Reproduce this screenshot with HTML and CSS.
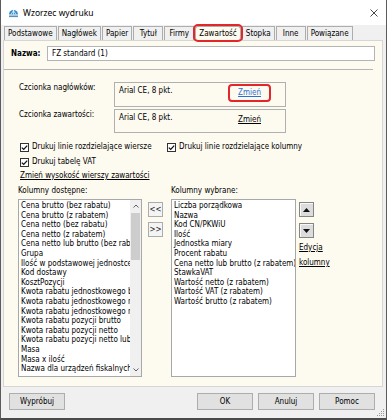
FILE: index.html
```html
<!DOCTYPE html>
<html lang="pl">
<head>
<meta charset="utf-8">
<title>Wzorzec wydruku</title>
<link rel="stylesheet" href="styles.css">
</head>
<body>
<div class="window">
  <div class="titlebar">
    <svg class="appicon" viewBox="0 0 11 10" aria-hidden="true">
      <path d="M1 6.5 A4.5 4.5 0 0 1 10 6.5 Z" fill="#2f8ccf"/>
      <path d="M3 6.5 L5.5 2.5 M5.5 6.5 V2 M8 6.5 L5.5 2.5" stroke="#fff" stroke-width=".7" fill="none"/>
      <rect x="1" y="7.5" width="9" height="1.6" fill="#5b8db8"/>
    </svg>
    <span class="title">Wzorzec wydruku</span>
    <svg class="close" viewBox="0 0 8 8" aria-hidden="true">
      <path d="M0.5 0.5 L7.5 7.5 M7.5 0.5 L0.5 7.5" stroke="#333" stroke-width="0.9"/>
    </svg>
  </div>

  <div class="tabs">
    <div class="tab">Podstawowe</div>
    <div class="tab">Nagłówek</div>
    <div class="tab">Papier</div>
    <div class="tab">Tytuł</div>
    <div class="tab">Firmy</div>
    <div class="tab active">Zawartość</div>
    <div class="tab">Stopka</div>
    <div class="tab">Inne</div>
    <div class="tab">Powiązane</div>
  </div>

  <div class="panel">
    <div class="name-row">
      <span class="name-label">Nazwa:</span>
      <div class="input">FZ standard (1)</div>
    </div>
    <div class="sep"></div>

    <div class="font-row first">
      <span class="font-label">Czcionka nagłówków:</span>
      <div class="font-box">
        <span>Arial CE, 8 pkt.</span>
        <span class="change-wrap marked"><a class="link blue">Zmień</a></span>
      </div>
    </div>
    <div class="font-row second">
      <span class="font-label">Czcionka zawartości:</span>
      <div class="font-box">
        <span>Arial CE, 8 pkt.</span>
        <span class="change-wrap"><a class="link">Zmień</a></span>
      </div>
    </div>

    <div class="check-row r1">
      <span class="check wide">
        <svg class="cb" viewBox="0 0 9 9" aria-hidden="true"><rect x=".5" y=".5" width="8" height="8" fill="#fff" stroke="#333"/><path d="M1.8 4.6 L3.7 6.4 L7.2 2.6" fill="none" stroke="#111" stroke-width="1.3"/></svg>
        Drukuj linie rozdzielające wiersze
      </span>
      <span class="check">
        <svg class="cb" viewBox="0 0 9 9" aria-hidden="true"><rect x=".5" y=".5" width="8" height="8" fill="#fff" stroke="#333"/><path d="M1.8 4.6 L3.7 6.4 L7.2 2.6" fill="none" stroke="#111" stroke-width="1.3"/></svg>
        Drukuj linie rozdzielające kolumny
      </span>
    </div>
    <div class="check-row r2">
      <span class="check">
        <svg class="cb" viewBox="0 0 9 9" aria-hidden="true"><rect x=".5" y=".5" width="8" height="8" fill="#fff" stroke="#333"/><path d="M1.8 4.6 L3.7 6.4 L7.2 2.6" fill="none" stroke="#111" stroke-width="1.3"/></svg>
        Drukuj tabelę VAT
      </span>
    </div>

    <div class="link-row"><a class="link">Zmień wysokość wierszy zawartości</a></div>

    <div class="cols-labels">
      <span class="lab-left">Kolumny dostępne:</span>
      <span>Kolumny wybrane:</span>
    </div>

    <div class="lists">
      <div class="list left">
        <div class="items">
          <div>Cena brutto (bez rabatu)</div>
          <div>Cena brutto (z rabatem)</div>
          <div>Cena netto (bez rabatu)</div>
          <div>Cena netto (z rabatem)</div>
          <div>Cena netto lub brutto (bez rabatu)</div>
          <div>Grupa</div>
          <div>Ilość w podstawowej jednostce</div>
          <div>Kod dostawy</div>
          <div>KosztPozycji</div>
          <div>Kwota rabatu jednostkowego brutto</div>
          <div>Kwota rabatu jednostkowego netto</div>
          <div>Kwota rabatu jednostkowego netto lub brutto</div>
          <div>Kwota rabatu pozycji brutto</div>
          <div>Kwota rabatu pozycji netto</div>
          <div>Kwota rabatu pozycji netto lub brutto</div>
          <div>Masa</div>
          <div>Masa x ilość</div>
          <div>Nazwa dla urządzeń fiskalnych</div>
        </div>
        <div class="scrollbar">
          <div class="sb-arrow">
            <svg viewBox="0 0 6 4" aria-hidden="true"><path d="M0.5 3.5 L3 1 L5.5 3.5" fill="none" stroke="#606060" stroke-width="1"/></svg>
          </div>
          <div class="sb-track"><div class="sb-thumb"></div></div>
          <div class="sb-arrow">
            <svg viewBox="0 0 6 4" aria-hidden="true"><path d="M0.5 0.5 L3 3 L5.5 0.5" fill="none" stroke="#606060" stroke-width="1"/></svg>
          </div>
        </div>
      </div>

      <div class="mid">
        <button class="move">&lt;&lt;</button>
        <button class="move">&gt;&gt;</button>
      </div>

      <div class="list right">
        <div class="items">
          <div>Liczba porządkowa</div>
          <div>Nazwa</div>
          <div>Kod CN/PKWiU</div>
          <div>Ilość</div>
          <div>Jednostka miary</div>
          <div>Procent rabatu</div>
          <div>Cena netto lub brutto (z rabatem)</div>
          <div>StawkaVAT</div>
          <div>Wartość netto (z rabatem)</div>
          <div>Wartość VAT (z rabatem)</div>
          <div>Wartość brutto (z rabatem)</div>
        </div>
      </div>

      <div class="side">
        <button class="order"><svg viewBox="0 0 7 4" aria-hidden="true"><path d="M0 4 L3.5 0 L7 4 Z" fill="#111"/></svg></button>
        <button class="order"><svg viewBox="0 0 7 4" aria-hidden="true"><path d="M0 0 L3.5 4 L7 0 Z" fill="#111"/></svg></button>
        <div class="side-links"><a class="link">Edycja</a><br><a class="link">kolumny</a></div>
      </div>
    </div>
  </div>

  <div class="footer">
    <button class="btn">Wypróbuj</button>
    <div class="spacer"></div>
    <button class="btn">OK</button>
    <button class="btn">Anuluj</button>
    <button class="btn">Pomoc</button>
  </div>

  <svg class="grip" viewBox="0 0 8 8" aria-hidden="true">
    <rect x="6" y="0" width="1" height="1" fill="#9a9a9a"/>
    <rect x="4" y="2" width="1" height="1" fill="#9a9a9a"/>
    <rect x="6" y="2" width="1" height="1" fill="#9a9a9a"/>
    <rect x="2" y="4" width="1" height="1" fill="#9a9a9a"/>
    <rect x="4" y="4" width="1" height="1" fill="#9a9a9a"/>
    <rect x="6" y="4" width="1" height="1" fill="#9a9a9a"/>
    <rect x="0" y="6" width="1" height="1" fill="#9a9a9a"/>
    <rect x="2" y="6" width="1" height="1" fill="#9a9a9a"/>
    <rect x="4" y="6" width="1" height="1" fill="#9a9a9a"/>
    <rect x="6" y="6" width="1" height="1" fill="#9a9a9a"/>
  </svg>
</div>
</body>
</html>
```

FILE: styles.css
```css
* { box-sizing: border-box; }

html, body {
  margin: 0;
  padding: 0;
}

body {
  width: 387px;
  height: 420px;
  overflow: hidden;
  background: #fff;
  color: #000;
  font-family: "DejaVu Sans Condensed", "DejaVu Sans", sans-serif;
  font-size: 8px;
}

.window {
  position: relative;
  width: 387px;
  height: 420px;
  display: flex;
  flex-direction: column;
  background: #f0f0f0;
  border-left: 1px solid #5c5c5c;
  border-right: 1px solid #5c5c5c;
  border-bottom: 2px solid #4a4a4a;
}

/* title bar */
.titlebar {
  flex: none;
  height: 25px;
  display: flex;
  align-items: center;
  padding-left: 7px;
  background: #fff;
}

.appicon {
  width: 11px;
  height: 10px;
  margin-right: 4px;
}

.title {
  flex: 1;
  font-family: "Noto Sans", sans-serif;
  font-size: 8.5px;
}

.close {
  width: 8px;
  height: 8px;
  margin-right: 8px;
}

/* tabs */
.tabs {
  flex: none;
  display: flex;
  gap: 1px;
  height: 14px;
  margin-top: 1px;
  padding-left: 3px;
}

.tab {
  height: 14px;
  min-width: 30px;
  padding: 0 3px;
  line-height: 13px;
  text-align: center;
  background: #f0f0f0;
  border: 1px solid #adadad;
  border-bottom: none;
}

.tab.active {
  position: relative;
  z-index: 1;
  background: #fdfaf0;
  outline: 2px solid #e3262c;
  outline-offset: 0;
  border-radius: 3px;
}

/* main panel */
.panel {
  flex: none;
  height: 347px;
  margin: 0 3px 0 2px;
  padding-top: 5px;
  background: #fdfaf0;
  border: 1px solid #d6d6d6;
}

.name-row {
  display: flex;
  align-items: center;
  height: 15px;
}

.name-label {
  width: 36px;
  margin-left: 7px;
  font-weight: bold;
}

.input {
  width: 328px;
  height: 15px;
  padding-left: 4px;
  line-height: 13px;
  background: #fff;
  border: 1px solid #b4b4b4;
}

.sep {
  height: 1px;
  margin: 8px 9px 0 0;
  background: #b5b5b5;
}

.font-row {
  display: flex;
  align-items: flex-start;
  margin-top: 2px;
}

.font-row.first { margin-top: 12px; }

.font-label {
  width: 95px;
  margin-left: 15px;
  padding-top: 1px;
  line-height: 10px;
}

.font-box {
  width: 172px;
  height: 25px;
  display: flex;
  justify-content: space-between;
  align-items: flex-start;
  padding: 3px 14px 0 4px;
  line-height: 10px;
  border: 1px solid #b0b0b0;
}

.font-row.second .font-box { height: 24px; }

.change-wrap {
  margin-top: -2px;
  padding: 4px 10px;
  line-height: 10px;
}

.change-wrap.marked {
  outline: 2px solid #e3262c;
  outline-offset: -2px;
  border-radius: 4px;
}

.link {
  color: #000;
  text-decoration: underline;
}

.link.blue { color: #2a6fd6; }

.check-row {
  display: flex;
  align-items: center;
  height: 12px;
  line-height: 12px;
  margin-left: 16px;
}

.check-row.r1 { margin-top: 8px; }
.check-row.r2 { margin-top: 3px; }

.check {
  display: flex;
  align-items: center;
}

.check.wide { width: 147px; }

.cb {
  width: 9px;
  height: 9px;
  margin-right: 3px;
  flex: none;
}

.link-row {
  margin: 2px 0 0 16px;
  line-height: 12px;
}

.cols-labels {
  display: flex;
  margin: 3px 0 0 14px;
  line-height: 12px;
}

.lab-left { width: 153px; }

/* lists */
.lists {
  display: flex;
  align-items: flex-start;
  margin: 2px 0 0 14px;
}

.list {
  height: 178px;
  overflow: hidden;
  background: #fff;
  border: 1px solid #a8a8a8;
}

.list.left {
  width: 124px;
  display: flex;
}

.list.right {
  width: 125px;
  padding-left: 1px;
}

.items {
  flex: 1;
  overflow: hidden;
  padding: 1px 0 0 2px;
  white-space: nowrap;
  line-height: 9.6px;
}

.list.right .items { padding-left: 1px; }

.scrollbar {
  flex: none;
  width: 11px;
  display: flex;
  flex-direction: column;
  background: #f0f0f0;
}

.sb-arrow {
  flex: none;
  height: 12px;
  display: flex;
  align-items: center;
  justify-content: center;
}

.sb-arrow svg {
  width: 6px;
  height: 4px;
}

.sb-track {
  flex: 1;
  padding: 1px 1px 0;
}

.sb-thumb {
  height: 47px;
  background: #cdcdcd;
}

.mid {
  display: flex;
  flex-direction: column;
  gap: 5px;
  margin: 3px 8px 0 6px;
}

button {
  font-family: inherit;
  font-size: 8px;
  color: #000;
  padding: 0;
  margin: 0;
}

.move {
  width: 15px;
  height: 15px;
  line-height: 13px;
  background: #f4f4f4;
  border: 1px solid #acacac;
  color: #222;
}

.side {
  display: flex;
  flex-direction: column;
  margin: 3px 0 0 3px;
}

.order {
  width: 15px;
  height: 15px;
  display: flex;
  align-items: center;
  justify-content: center;
  background: #dcdcdc;
  border: 1px solid #858585;
  box-shadow: inset 1px 1px 0 #f8f8f8;
}

.order + .order { margin-top: 6px; }

.order svg {
  width: 7px;
  height: 4px;
}

.side-links {
  margin-top: 2px;
  line-height: 15px;
}

/* footer */
.footer {
  flex: 1;
  display: flex;
  align-items: flex-start;
  gap: 5px;
  padding: 6px 11px 0 8px;
}

.spacer { flex: 1; }

.btn {
  width: 56px;
  height: 17px;
  background: #e1e1e1;
  border: 1px solid #adadad;
}

.grip {
  position: absolute;
  right: 1px;
  bottom: 1px;
  width: 8px;
  height: 8px;
}
```
